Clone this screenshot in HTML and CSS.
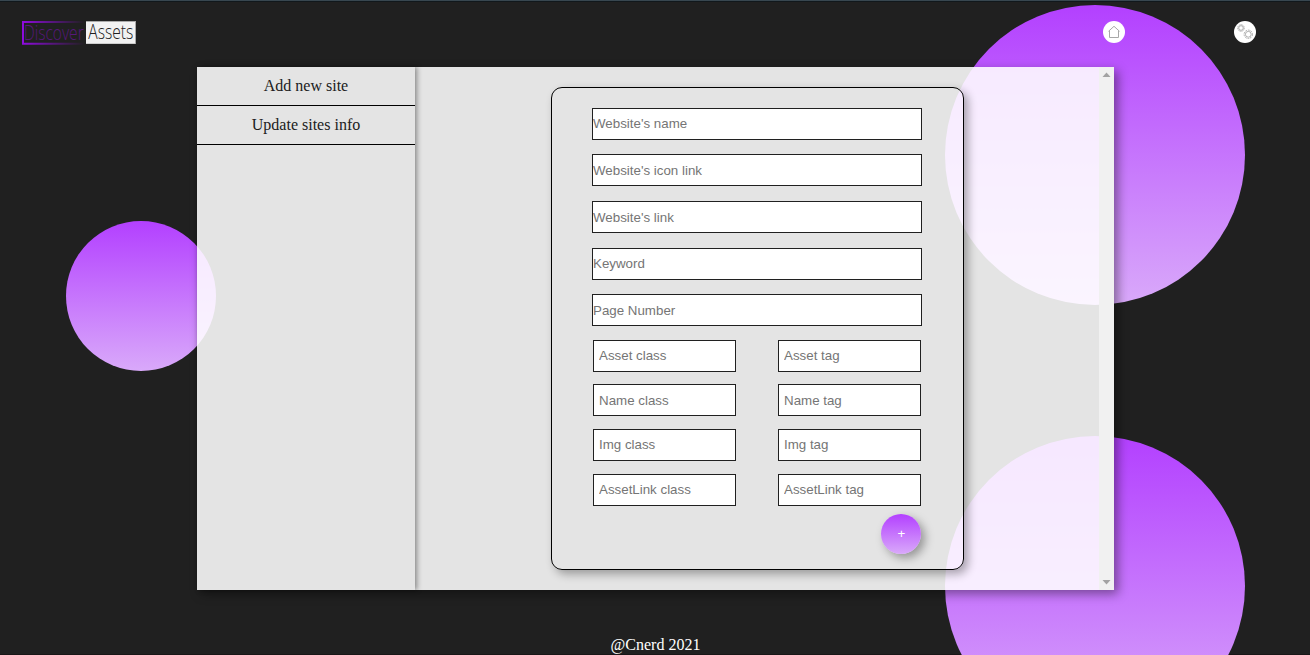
FILE: index.html
```
<!DOCTYPE html>
<html lang="en">
<head>
<meta charset="utf-8">
<title>Discover Assets</title>
<link rel="stylesheet" href="styles.css">
</head>
<body>
<div class="page">
  <div class="circle circle-top"></div>
  <div class="circle circle-left"></div>
  <div class="circle circle-bottom"></div>
  <header class="header">
    <svg class="logo" width="116" height="26" viewBox="0 0 116 26" aria-label="Discover Assets">
      <defs>
        <linearGradient id="frame" gradientUnits="userSpaceOnUse" x1="1" y1="0" x2="64" y2="0">
          <stop offset="0" stop-color="#900be0"/>
          <stop offset="1" stop-color="#860bd0" stop-opacity="0"/>
        </linearGradient>
      </defs>
      <path d="M64 2H2V23.800H64" fill="none" stroke="url(#frame)" stroke-width="2"/>
      <text class="logo-text logo-first" transform="translate(2.700 19.900) scale(1 1.280)" textLength="60" lengthAdjust="spacingAndGlyphs">Discover</text>
      <rect x="65" y="1" width="50" height="23" fill="#aaa"/>
      <rect x="65" y="2" width="49" height="21.500" fill="#f2f2f2"/>
      <text class="logo-text logo-second" transform="translate(67.300 19) scale(1 1.280)" textLength="45" lengthAdjust="spacingAndGlyphs">Assets</text>
    </svg>
    <nav class="nav">
      <a class="nav-link" aria-label="Home">
        <svg width="22" height="22" viewBox="0 0 22 22" fill="none" stroke="#a8a8a8" stroke-width="1">
          <path d="M5.500 10.300 11 5.300 16.500 10.300M6.500 9.800V16.500H15.500V9.800"/>
        </svg>
      </a>
      <a class="nav-link" aria-label="Settings">
        <svg width="22" height="22" viewBox="0 0 22 22" fill="none" stroke="#a4a4a4" stroke-width="0.900">
          <circle cx="7" cy="7" r="3.300" stroke-dasharray="1.500 .7"/>
          <circle cx="7" cy="7" r="2.300"/>
          <circle cx="14.300" cy="13.300" r="4.200" stroke-dasharray="1.800 .9"/>
          <circle cx="14.300" cy="13.300" r="2.900"/>
        </svg>
      </a>
    </nav>
  </header>
  <main class="panel">
    <aside class="sidebar">
      <a class="side-link">Add new site</a>
      <a class="side-link">Update sites info</a>
    </aside>
    <section class="content">
      <form class="card">
        <div class="wide-fields">
          <input class="field" placeholder="Website's name">
          <input class="field" placeholder="Website's icon link">
          <input class="field" placeholder="Website's link">
          <input class="field" placeholder="Keyword">
          <input class="field" placeholder="Page Number">
        </div>
        <div class="pair-fields">
          <input class="field small" placeholder="Asset class">
          <input class="field small" placeholder="Asset tag">
          <input class="field small" placeholder="Name class">
          <input class="field small" placeholder="Name tag">
          <input class="field small" placeholder="Img class">
          <input class="field small" placeholder="Img tag">
          <input class="field small" placeholder="AssetLink class">
          <input class="field small" placeholder="AssetLink tag">
        </div>
        <button class="add" type="button">+</button>
      </form>
    </section>
    <div class="scrollbar">
      <svg width="15" height="16" viewBox="0 0 15 16"><path d="M3.500 10 7.500 5.500 11.500 10Z" fill="#a3a3a3"/></svg>
      <svg width="15" height="16" viewBox="0 0 15 16"><path d="M3.500 6 7.500 10.500 11.500 6Z" fill="#a3a3a3"/></svg>
    </div>
  </main>
  <footer class="footer">@Cnerd 2021</footer>
</div>
</body>
</html>
```
FILE: styles.css
```
* { box-sizing: border-box; }
body {
  margin: 0;
  background: #202020;
  font-family: "Liberation Serif", "Times New Roman", serif;
  font-size: 16px;
}
.page {
  position: relative;
  display: flex;
  flex-direction: column;
  height: 655px;
  overflow: hidden;
  border-top: 1px solid #384750;
  box-shadow: inset 0 1px #11181c, inset 0 -1px #191617;
}
.circle {
  position: absolute;
  width: 300px;
  height: 300px;
  border-radius: 50%;
  background: linear-gradient(#b340ff, #d9a9fa);
}
.circle-top { left: 945px; top: 4px; }
.circle-left { left: 66px; top: 220px; width: 150px; height: 150px; }
.circle-bottom { left: 945px; top: 435px; }
.header {
  position: relative;
  display: flex;
  justify-content: space-between;
  align-items: flex-start;
  height: 66px;
  padding: 19px 54px 0 21px;
}
.logo { display: block; overflow: visible; }
.logo-text {
  font-family: "Open Sans", sans-serif;
  font-weight: 300;
  font-size: 15.5px;
}
.logo-first { fill: #56187a; }
.logo-second { fill: #202020; }
.nav { display: flex; gap: 109px; padding-top: 1px; }
.nav-link {
  width: 22px;
  height: 22px;
  border-radius: 50%;
  background: #fff;
}
.nav-link svg { display: block; }
.panel {
  position: relative;
  display: flex;
  width: 917px;
  height: 523px;
  margin-left: 197px;
  background: rgba(255, 255, 255, 0.88);
  box-shadow: 4px 4px 10px rgba(0, 0, 0, 0.4);
}
.sidebar {
  width: 218px;
  box-shadow: 2px 0 5px rgba(0, 0, 0, 0.4);
}
.side-link {
  display: block;
  height: 39px;
  border-bottom: 1px solid #000;
  color: #202020;
  line-height: 38px;
  text-align: center;
}
.content {
  flex: 1;
  display: flex;
  justify-content: center;
  align-items: flex-start;
  padding: 20px 0 0 1px;
}
.card {
  display: flex;
  flex-direction: column;
  width: 413px;
  height: 483px;
  padding: 19.8px 41px 0 40px;
  border: 1px solid #000;
  border-radius: 11px;
  box-shadow: 4px 4px 10px rgba(0, 0, 0, 0.33);
}
.wide-fields { display: grid; gap: 14.64px; }
.field {
  display: block;
  width: 100%;
  height: 32px;
  padding: 0;
  border: 1px solid #202020;
  border-radius: 0;
  background: #fff;
  font: 13.333px "Liberation Sans", Arial, sans-serif;
}
.field::placeholder { color: #757575; }
.small { padding: 0 5px; }
.pair-fields {
  display: grid;
  grid-template-columns: 143px 143px;
  column-gap: 42px;
  row-gap: 12.6px;
  margin: 13.44px 0 0 1px;
}
.add {
  align-self: flex-end;
  width: 40px;
  height: 40px;
  margin: 8.4px 1px 0 0;
  padding: 0 0 0 1px;
  border: 0;
  border-radius: 50%;
  background: linear-gradient(#b340ff, #d9a9fa);
  box-shadow: 4px 4px 10px rgba(0, 0, 0, 0.35);
  color: #fff;
  font: 13.333px "Liberation Sans", Arial, sans-serif;
}
.scrollbar {
  display: flex;
  flex-direction: column;
  justify-content: space-between;
  width: 15px;
  background: #f1f1f1;
}
.footer {
  position: relative;
  padding: 46px 0 0 1px;
  color: #fff;
  line-height: 18px;
  text-align: center;
}
```
